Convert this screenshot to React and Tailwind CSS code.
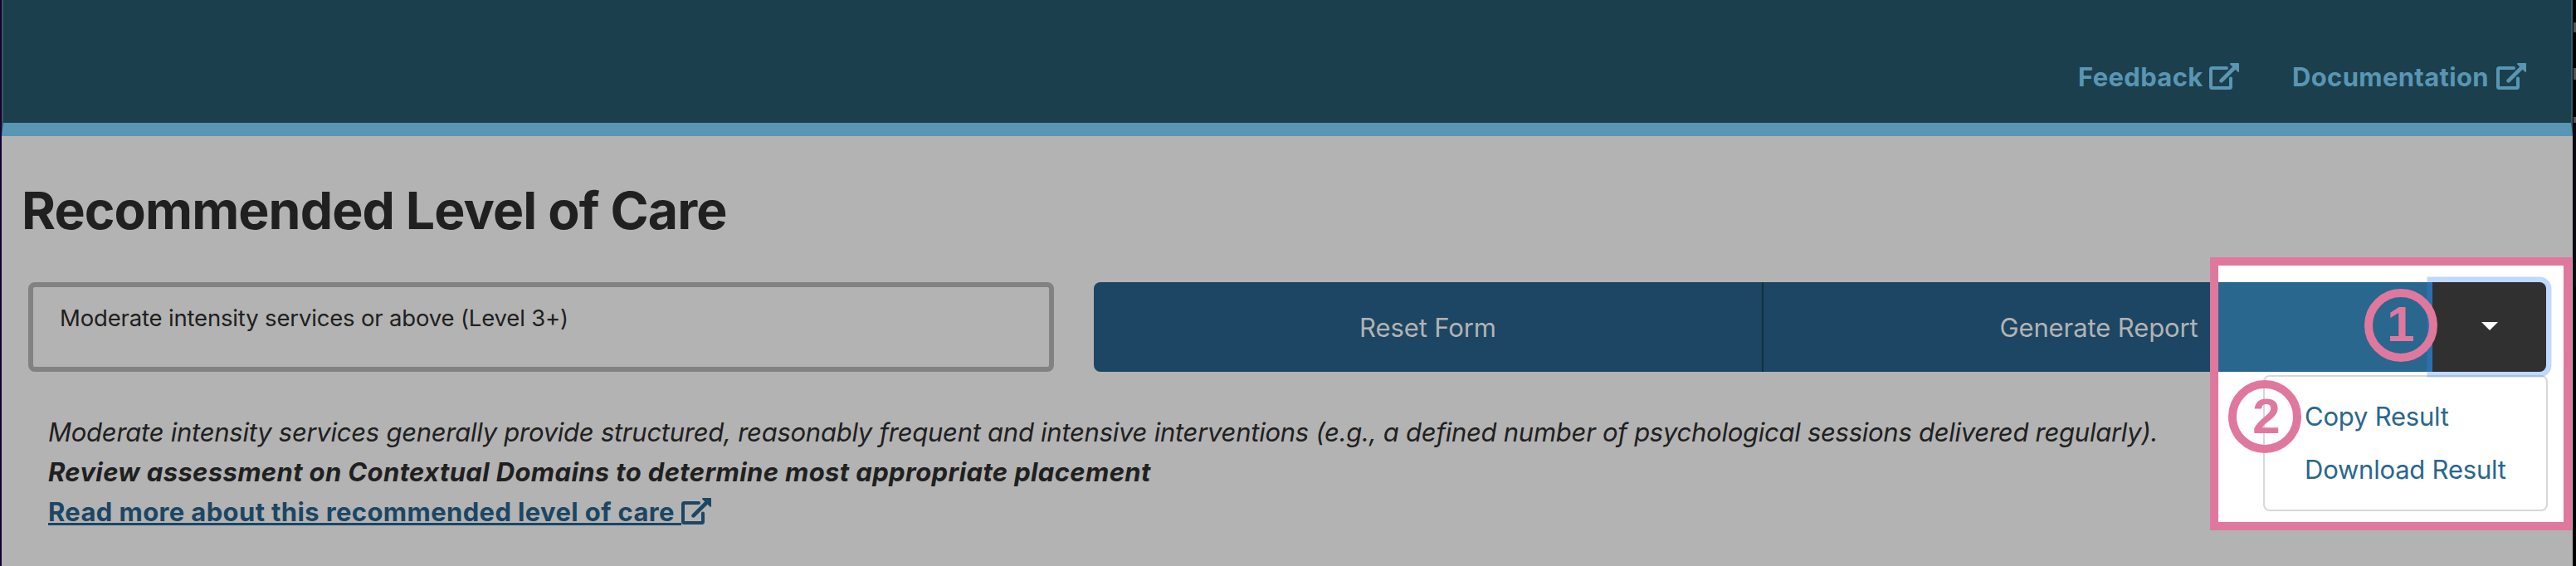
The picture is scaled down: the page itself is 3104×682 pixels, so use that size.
function ExternalIcon({ className }) {
  return (
    <svg viewBox="0 0 36 32" className={"h-8 w-9 shrink-0 " + className} fill="none">
      <path d="M21 6H3.500A1.500 1.500 0 0 0 2 7.500v21A1.500 1.500 0 0 0 3.500 30h21a1.500 1.500 0 0 0 1.500-1.500V18.500" stroke="currentColor" strokeWidth="4" strokeLinecap="round" />
      <path d="M14.500 21.300 31 5" stroke="currentColor" strokeWidth="4.600" strokeLinecap="round" />
      <path d="M26 0h9.200a.8.8 0 0 1 .8.8V10c0 .9-1 1.200-1.600.6L25.400 1.700C24.800 1 25 0 26 0Z" fill="currentColor" />
    </svg>
  );
}

function Marker({ className, children }) {
  return (
    <div className={"absolute flex size-[88px] items-center justify-center rounded-full border-[10px] border-[#e0789e] font-['Liberation_Sans',sans-serif] text-[60px] leading-none font-bold text-[#e0789e] " + className}>
      {children}
    </div>
  );
}

export default function App() {
  return (
    <div className="relative flex h-[682px] w-[3104px] overflow-hidden bg-[#020203] font-[Inter,sans-serif] text-[31px] leading-[48px] text-[#202020]">
      <div className="w-[2px] bg-[#150033]" />
      <div className="flex w-[3098px] flex-col bg-[#b3b3b3]">
        <header className="flex h-[164px] items-start justify-end border-x-2 border-b-[16px] border-x-[#365662] border-b-[#5996b3] bg-[#1c3f4d] pt-[69px] pr-[54px] font-bold tracking-[0.340px] text-[#5996b3]">
          <a className="mr-[64px] flex"><span className="w-[158px]">Feedback</span><ExternalIcon className="mt-[7px]" /></a>
          <a className="flex"><span className="w-[246px]">Documentation</span><ExternalIcon className="mt-[7px]" /></a>
        </header>
        <h1 className="mt-[49px] ml-6 h-[80px] text-[62.500px] leading-[80px] font-bold tracking-[-0.900px] whitespace-nowrap">Recommended Level of Care</h1>
        <div className="mt-[47px] flex h-[108px] pl-8">
          <div className="h-[108px] w-[1236px] rounded-lg border-[6px] border-[#828282] pt-[17px] pl-8 text-[27.500px] leading-[40px] tracking-[-0.170px]">Moderate intensity services or above (Level 3+)</div>
          <div className="ml-12 flex h-[108px] w-[1750px] tracking-[-0.100px] text-[#b3b3b3]">
            <button className="w-[805px] rounded-l-lg bg-[#1c4663] pt-[2px]">Reset Form</button>
            <button className="w-[808px] border-l-2 border-[#12303a] bg-[#1c4663] pt-[2px] pl-[2px]">Generate Report</button>
            <button className="w-[137px] rounded-r-lg bg-[#303030]" />
          </div>
        </div>
        <div className="mt-[49px] pl-14 whitespace-nowrap">
          <p className="tracking-[-0.262px] italic">Moderate intensity services generally provide structured, reasonably frequent and intensive interventions (e.g., a defined number of psychological sessions delivered regularly).</p>
          <p className="font-bold tracking-[0.360px] italic">Review assessment on Contextual Domains to determine most appropriate placement</p>
          <a className="flex font-bold tracking-[0.370px] text-[#1c4663]"><span className="h-[40px] w-[763px] border-b-[3px] border-[#1c4663]">Read more about this recommended level of care</span><ExternalIcon className="mt-[7px]" /></a>
        </div>
      </div>
      <div className="flex w-1 flex-col items-end pt-[27px]">
        <div className="h-3 w-[3px] bg-[#555]" />
        <div className="mt-[43px] h-[14px] w-[3px] bg-[#555]" />
        <div className="mt-[45px] h-[7px] w-[3px] bg-[#555]" />
        <div className="mt-[2px] h-[196px] w-[3px] bg-[#0c0812]" />
      </div>
      <div className="absolute top-[310px] left-[2663px] h-[329px] w-[436px] overflow-hidden border-[10px] border-[#e0789e] bg-white">
        <div className="mt-5 flex h-[108px]">
          <div className="w-[258px] bg-[#29678e]" />
          <div className="flex w-[137px] items-center justify-center rounded-r-lg bg-[#303030] pb-[2px] shadow-[0_0_0_6.500px_rgba(50,130,255,0.300)]">
            <svg viewBox="0 0 20 10" className="h-[10px] w-5" fill="white"><path d="M0 0H20L10 10Z" /></svg>
          </div>
        </div>
        <div className="mt-1 ml-[54px] h-[164px] w-[343px] rounded-lg border-2 border-[#d8d8d8] pt-6 pl-[48px] tracking-[-0.220px] text-[#29678e]">
          <div className="h-16">Copy Result</div>
          <div className="h-16">Download Result</div>
        </div>
      </div>
      <Marker className="top-[348px] left-[2849px]"><span className="relative -top-px">1</span></Marker>
      <Marker className="top-[458px] left-[2685px]"><span className="relative left-[2px]">2</span></Marker>
    </div>
  );
}
